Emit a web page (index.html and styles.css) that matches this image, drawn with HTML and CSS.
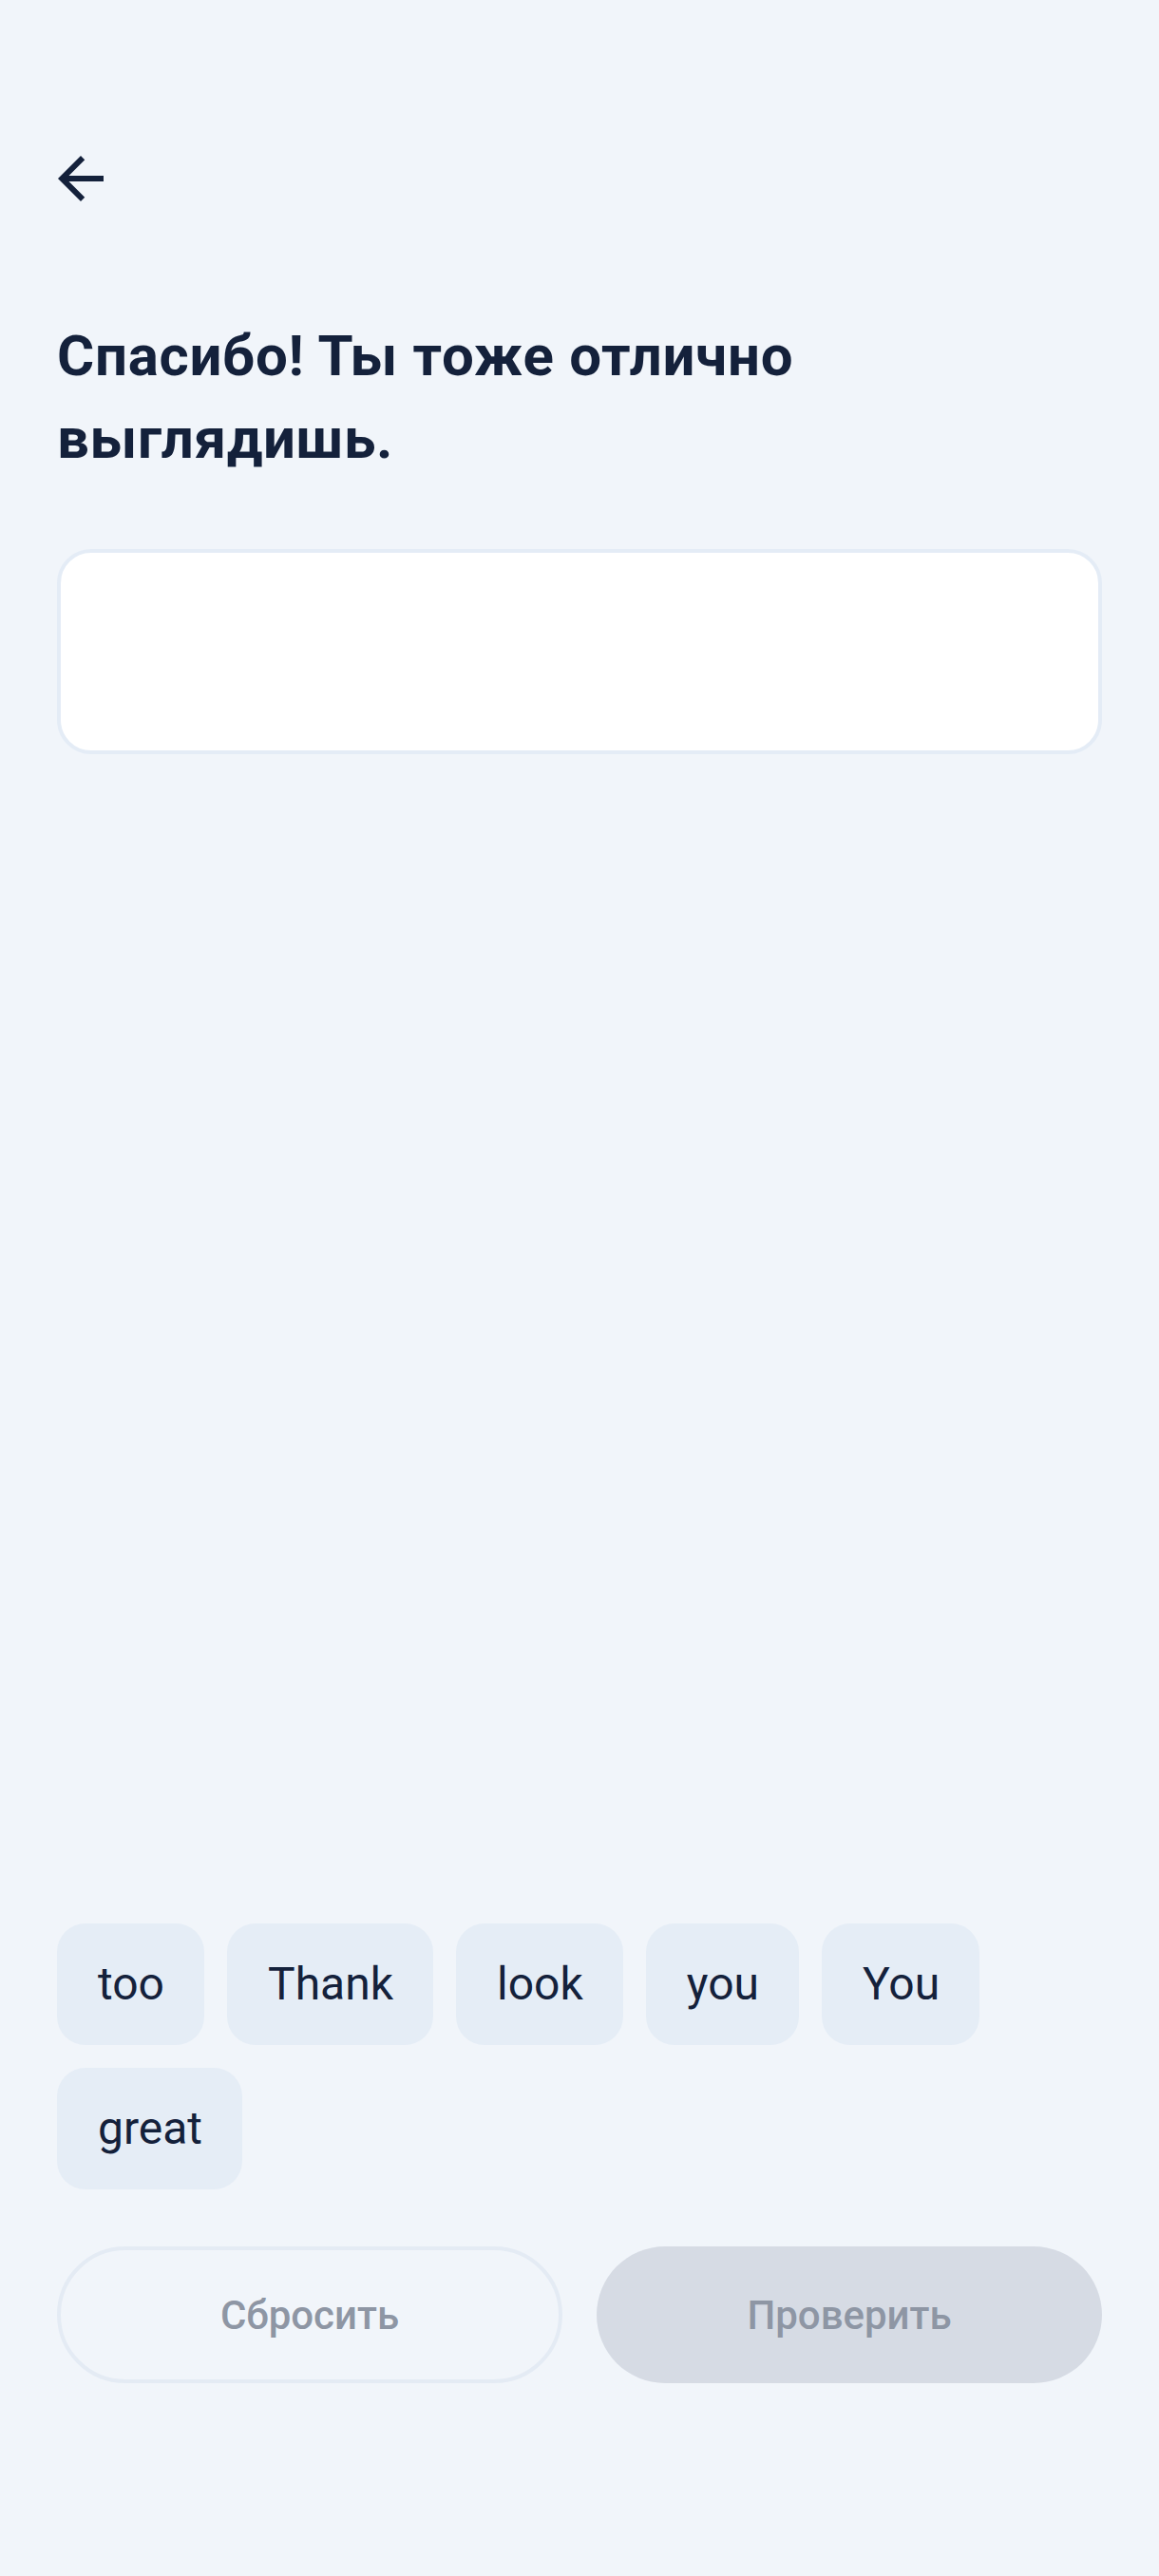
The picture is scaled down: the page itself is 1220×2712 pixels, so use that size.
FILE: index.html
```html
<!DOCTYPE html>
<html lang="ru">
<head>
    <meta charset="UTF-8">
    <meta name="viewport" content="width=device-width, initial-scale=1.0">
    <title>Собери фразу</title>
    <link rel="stylesheet" href="styles.css">
</head>
<body>
    <div class="screen">
        <!-- Top bar -->
        <div class="top-bar">
            <button class="back-btn" aria-label="Назад">
                <svg viewBox="0 0 24 24" width="72" height="72">
                    <path d="M20 11H7.83l5.59-5.59L12 4l-8 8 8 8 1.41-1.41L7.83 13H20v-2z" fill="#14213b"/>
                </svg>
            </button>
        </div>

        <h1 class="prompt">Спасибо! Ты тоже отлично выглядишь.</h1>

        <!-- Answer area -->
        <div class="answer-box"></div>

        <div class="spacer"></div>

        <!-- Word bank -->
        <div class="word-bank">
            <button class="chip">too</button>
            <button class="chip">Thank</button>
            <button class="chip">look</button>
            <button class="chip">you</button>
            <button class="chip">You</button>
            <button class="chip">great</button>
        </div>

        <!-- Actions -->
        <div class="actions">
            <button class="btn btn-reset">Сбросить</button>
            <button class="btn btn-check" disabled>Проверить</button>
        </div>
    </div>
</body>
</html>
```

FILE: styles.css
```css
body {
    margin: 0;
    background-color: #f1f5fa;
    font-family: Roboto, "Noto Sans", Arial, sans-serif;
    color: #14213b;
}

.screen {
    min-height: 100vh;
    box-sizing: border-box;
    padding: 0 60px 203px;
    display: flex;
    flex-direction: column;
}

/* Top bar */
.top-bar {
    height: 224px;
    display: flex;
    align-items: flex-end;
}

.back-btn {
    width: 72px;
    height: 72px;
    margin-left: -11px;
    padding: 0;
    border: none;
    background: none;
    cursor: pointer;
}

.back-btn svg {
    display: block;
}

.prompt {
    margin: 107px 0 0;
    width: 820px;
    font-size: 60px;
    font-weight: 700;
    line-height: 87px;
    letter-spacing: 0.7px;
    color: #14213b;
}

/* Answer area */
.answer-box {
    margin-top: 73px;
    height: 216px;
    box-sizing: border-box;
    background: #fff;
    border: 4px solid #e4ecf6;
    border-radius: 36px;
}

.spacer {
    flex: 1;
}

/* Word bank */
.word-bank {
    display: flex;
    flex-wrap: wrap;
    gap: 24px;
    width: 1000px;
}

.chip {
    padding: 36px 42px 36px 43px;
    border: none;
    border-radius: 30px;
    background-color: #e5edf6;
    font-family: inherit;
    font-size: 48px;
    line-height: 56px;
    color: #14213b;
    cursor: pointer;
}

/* Actions */
.actions {
    margin-top: 60px;
    display: grid;
    grid-template-columns: 1fr 1fr;
    gap: 36px;
}

.btn {
    box-sizing: border-box;
    height: 144px;
    padding: 0;
    border-radius: 72px;
    font-family: inherit;
    font-size: 42px;
    font-weight: 500;
    color: #8e96a4;
    cursor: pointer;
}

.btn-reset {
    background: transparent;
    border: 4px solid #e4ebf4;
}

.btn-check {
    background-color: #d6dbe4;
    border: none;
}
```
